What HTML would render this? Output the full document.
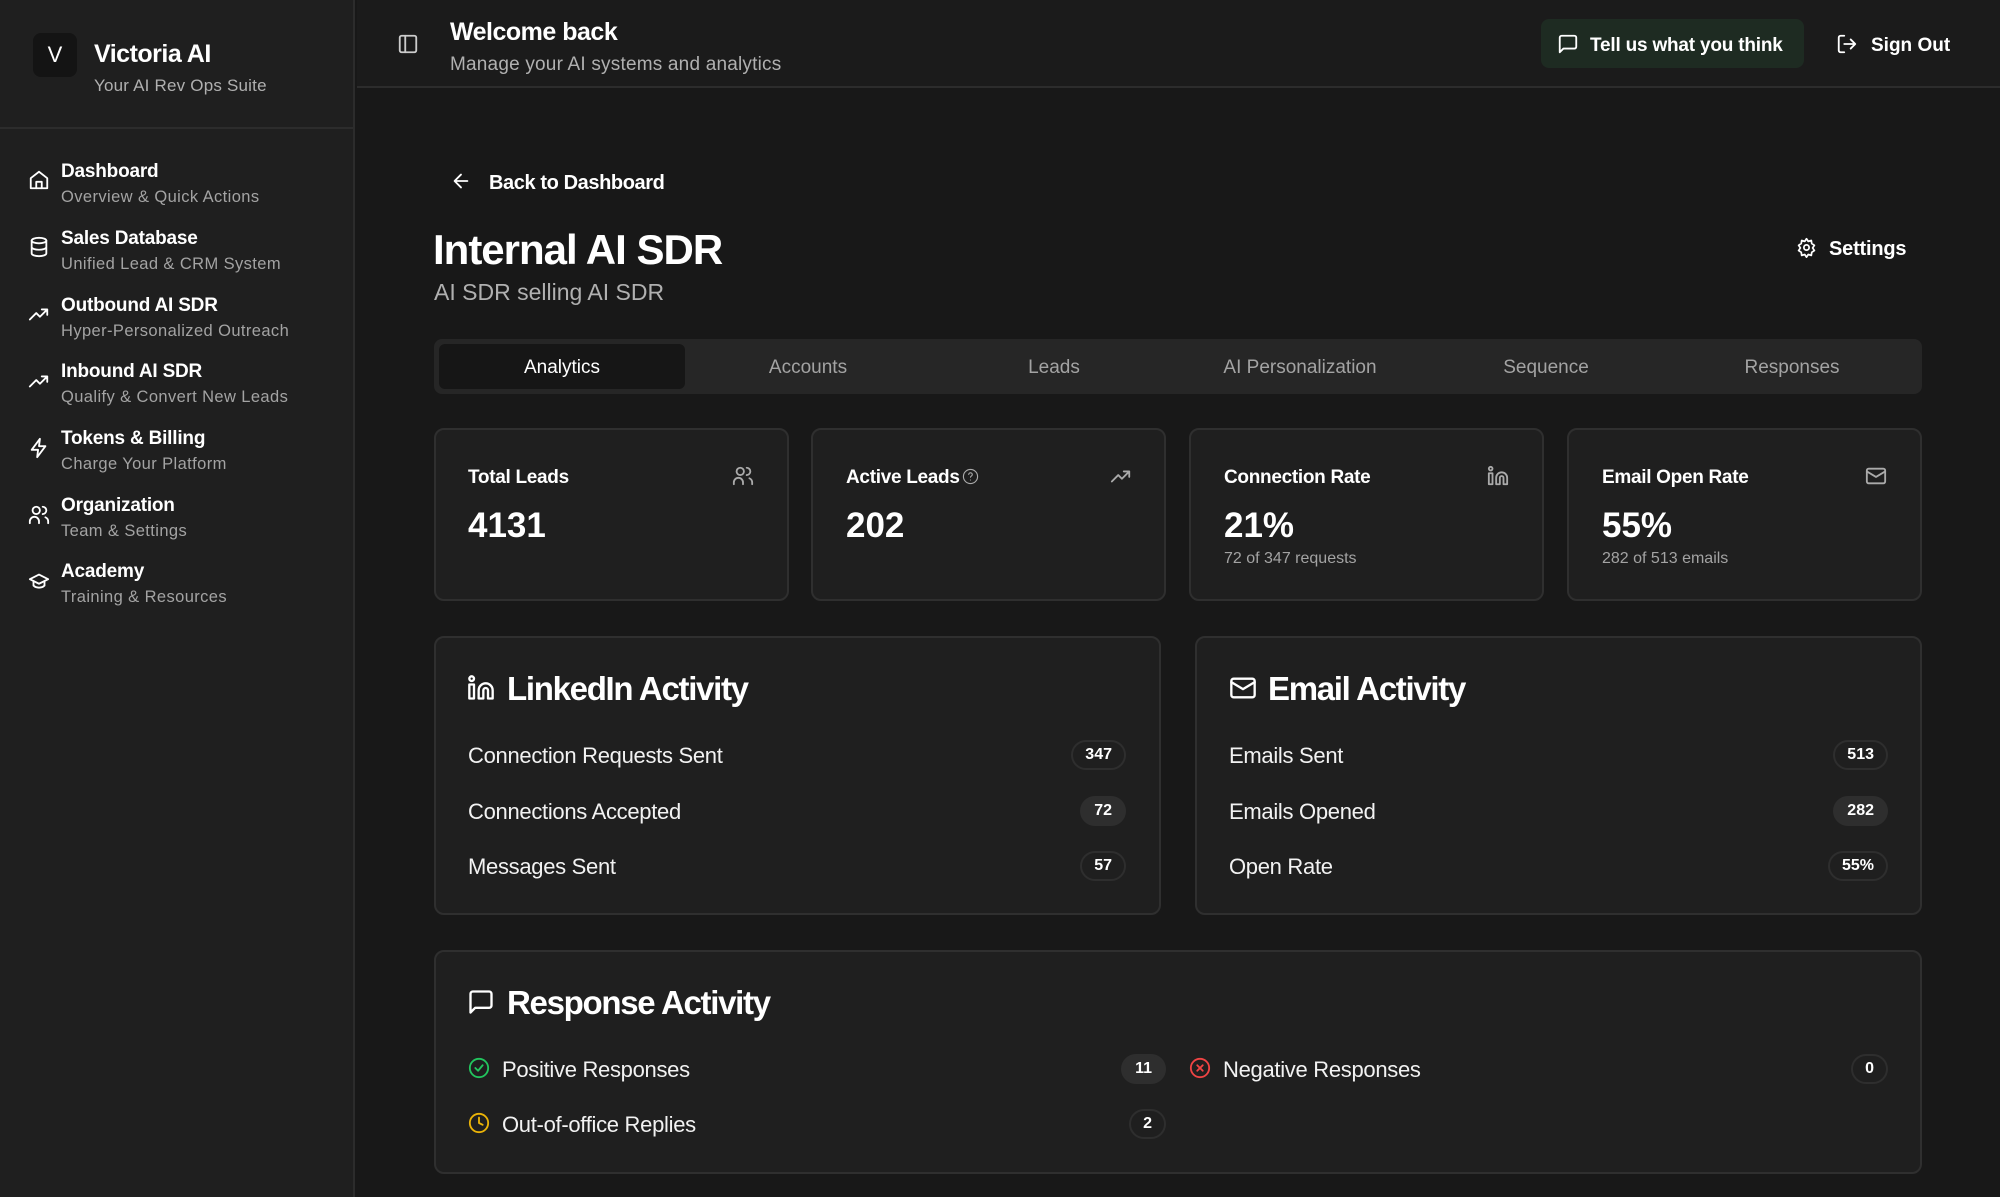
<!DOCTYPE html>
<html><head><meta charset="utf-8">
<style>
*{box-sizing:border-box;margin:0;padding:0}
body{width:2000px;height:1197px;background:#181818;font-family:"Liberation Sans",sans-serif;color:#fff;position:relative;overflow:hidden}
.a{position:absolute;white-space:nowrap}
.t{margin-top:3px}
svg{fill:none;stroke:currentColor;stroke-width:2;stroke-linecap:round;stroke-linejoin:round}
.side{position:absolute;left:0;top:0;width:355px;height:1197px;background:#1f1f1f;border-right:2px solid #2c2c2c}
.nt{font-size:19px;font-weight:bold;letter-spacing:-.2px;margin-top:2px}
.ns{font-size:16.5px;color:#a3a3a3;letter-spacing:.4px;margin-top:2px}
.card{position:absolute;background:#1f1f1f;border:2px solid #2f2f2f;border-radius:10px}
.lbl{font-size:19px;font-weight:bold;letter-spacing:-.3px;margin-top:2px}
.val{font-size:35px;font-weight:bold;margin-top:2px}
.sub{font-size:16px;color:#a3a3a3;margin-top:2px}
.h{font-size:33px;font-weight:bold;letter-spacing:-1.3px;margin-top:2px}
.row{font-size:22px;color:#f2f2f2;letter-spacing:-.3px;margin-top:2px}
.b{position:absolute;height:30px;border:2px solid #2e2e2e;border-radius:15px;font-size:16px;font-weight:bold;line-height:26px;padding:0 12px;text-align:center;margin-top:1px}
.f{background:#2e2e2e}
.tab{position:absolute;top:345px;height:45px;width:246px;line-height:45px;text-align:center;font-size:19px;color:#a3a3a3}
</style></head><body>
<div class="side"></div>
<div class="a" style="left:33px;top:33px;width:44px;height:44px;background:#141414;border-radius:8px;text-align:center;line-height:44px;font-size:22px">V</div>
<div class="a t" style="left:94px;top:37px;font-size:25px;font-weight:bold;letter-spacing:-.5px">Victoria AI</div>
<div class="a t" style="left:94px;top:73px;font-size:17px;color:#b0b0b0;letter-spacing:.2px">Your AI Rev Ops Suite</div>
<div class="a" style="left:0;top:127px;width:355px;height:2px;background:#2c2c2c"></div>

<svg class="a" style="left:28px;top:169px" width="22" height="22" viewBox="0 0 24 24"><path d="M3 10l9-7 9 7v11H3z"/><path d="M9 21v-7h6v7"/></svg>
<div class="a nt" style="left:61px;top:159px">Dashboard</div><div class="a ns" style="left:61px;top:186px">Overview &amp; Quick Actions</div>
<svg class="a" style="left:28px;top:236px" width="22" height="22" viewBox="0 0 24 24"><ellipse cx="12" cy="5" rx="8" ry="3"/><path d="M4 5v14c0 1.7 3.6 3 8 3s8-1.3 8-3V5M4 12c0 1.7 3.6 3 8 3s8-1.3 8-3"/></svg>
<div class="a nt" style="left:61px;top:226px">Sales Database</div><div class="a ns" style="left:61px;top:253px">Unified Lead &amp; CRM System</div>
<svg class="a" style="left:28px;top:303px" width="22" height="22" viewBox="0 0 24 24"><path d="M2 18l7-7 4 4 8-8M15 7h6v6"/></svg>
<div class="a nt" style="left:61px;top:293px">Outbound AI SDR</div><div class="a ns" style="left:61px;top:320px">Hyper-Personalized Outreach</div>
<svg class="a" style="left:28px;top:370px" width="22" height="22" viewBox="0 0 24 24"><path d="M2 18l7-7 4 4 8-8M15 7h6v6"/></svg>
<div class="a nt" style="left:61px;top:359px">Inbound AI SDR</div><div class="a ns" style="left:61px;top:386px">Qualify &amp; Convert New Leads</div>
<svg class="a" style="left:28px;top:437px" width="22" height="22" viewBox="0 0 24 24"><path d="M13 2L4 14h7l-1 8 9-12h-7z"/></svg>
<div class="a nt" style="left:61px;top:426px">Tokens &amp; Billing</div><div class="a ns" style="left:61px;top:453px">Charge Your Platform</div>
<svg class="a" style="left:28px;top:504px" width="22" height="22" viewBox="0 0 24 24"><circle cx="9" cy="7" r="4"/><path d="M2 21v-2a5 5 0 0110 0v2M16 3a4 4 0 010 8M22 21v-2a5 5 0 00-3-4.5"/></svg>
<div class="a nt" style="left:61px;top:493px">Organization</div><div class="a ns" style="left:61px;top:520px">Team &amp; Settings</div>
<svg class="a" style="left:28px;top:570px" width="22" height="22" viewBox="0 0 24 24"><path d="M2 10l10-5 10 5-10 5z"/><path d="M6 12v5c3 3 9 3 12 0v-5"/></svg>
<div class="a nt" style="left:61px;top:559px">Academy</div><div class="a ns" style="left:61px;top:586px">Training &amp; Resources</div>

<div class="a" style="left:357px;top:0;width:1643px;height:88px;background:#1b1b1b;border-bottom:2px solid #2c2c2c"></div>
<svg class="a" style="left:397px;top:33px;color:#ccc" width="22" height="22" viewBox="0 0 24 24"><rect x="3" y="3" width="18" height="18" rx="2"/><path d="M9 3v18"/></svg>
<div class="a t" style="left:450px;top:15px;font-size:25px;font-weight:bold;letter-spacing:-.5px">Welcome back</div>
<div class="a t" style="left:450px;top:51px;font-size:19px;color:#b0b0b0;letter-spacing:.2px">Manage your AI systems and analytics</div>
<div class="a" style="left:1541px;top:19px;width:263px;height:49px;background:#1e2b22;border-radius:8px"></div>
<svg class="a" style="left:1557px;top:33px" width="22" height="22" viewBox="0 0 24 24"><path d="M21 15a2 2 0 01-2 2H7l-4 4V5a2 2 0 012-2h14a2 2 0 012 2z"/></svg>
<div class="a t" style="left:1590px;top:32px;font-size:19px;font-weight:bold;letter-spacing:-.2px">Tell us what you think</div>
<svg class="a" style="left:1836px;top:33px" width="22" height="22" viewBox="0 0 24 24"><path d="M9 21H5a2 2 0 01-2-2V5a2 2 0 012-2h4M16 17l5-5-5-5M21 12H9"/></svg>
<div class="a t" style="left:1871px;top:32px;font-size:19px;font-weight:bold">Sign Out</div>

<svg class="a" style="left:450px;top:170px" width="22" height="22" viewBox="0 0 24 24"><path d="M19 12H5M12 19l-7-7 7-7"/></svg>
<div class="a t" style="left:489px;top:169px;font-size:20px;font-weight:bold;letter-spacing:-.4px">Back to Dashboard</div>
<div class="a t" style="left:433px;top:223px;font-size:42px;font-weight:bold;letter-spacing:-1px">Internal AI SDR</div>
<div class="a t" style="left:434px;top:276px;font-size:23px;color:#b0b0b0">AI SDR selling AI SDR</div>
<svg class="a" style="left:1796px;top:237px" width="21" height="21" viewBox="0 0 24 24"><circle cx="12" cy="12" r="3"/><path d="M12 2l2 3 3.5-1 .5 3.5 3 2-2 3 2 3-3 2-.5 3.5-3.5-1-2 3-2-3-3.5 1-.5-3.5-3-2 2-3-2-3 3-2L6.5 4 10 5z"/></svg>
<div class="a t" style="left:1829px;top:235px;font-size:20px;font-weight:bold;letter-spacing:-.2px">Settings</div>

<div class="a" style="left:434px;top:339px;width:1488px;height:55px;background:#262626;border-radius:8px"></div>
<div class="a" style="left:439px;top:344px;width:246px;height:45px;background:#161616;border-radius:6px"></div>
<div class="tab" style="left:439px;color:#fff">Analytics</div>
<div class="tab" style="left:685px">Accounts</div>
<div class="tab" style="left:931px">Leads</div>
<div class="tab" style="left:1177px">AI Personalization</div>
<div class="tab" style="left:1423px">Sequence</div>
<div class="tab" style="left:1669px">Responses</div>

<div class="card" style="left:434px;top:428px;width:355px;height:173px"></div>
<div class="a lbl" style="left:468px;top:465px">Total Leads</div>
<svg class="a" style="left:732px;top:465px;color:#aaa" width="22" height="22" viewBox="0 0 24 24"><circle cx="9" cy="7" r="4"/><path d="M2 21v-2a5 5 0 0110 0v2M16 3a4 4 0 010 8M22 21v-2a5 5 0 00-3-4.5"/></svg>
<div class="a val" style="left:468px;top:504px">4131</div>

<div class="card" style="left:811px;top:428px;width:355px;height:173px"></div>
<div class="a lbl" style="left:846px;top:465px">Active Leads</div>
<svg class="a" style="left:962px;top:468px;color:#aaa;stroke-width:1.6" width="17" height="17" viewBox="0 0 24 24"><circle cx="12" cy="12" r="10"/><path d="M9.5 9a2.5 2.5 0 015 .5c0 1.7-2.5 2-2.5 3.5M12 17h.01"/></svg>
<svg class="a" style="left:1110px;top:465px;color:#aaa" width="22" height="22" viewBox="0 0 24 24"><path d="M2 18l7-7 4 4 8-8M15 7h6v6"/></svg>
<div class="a val" style="left:846px;top:504px">202</div>

<div class="card" style="left:1189px;top:428px;width:355px;height:173px"></div>
<div class="a lbl" style="left:1224px;top:465px">Connection Rate</div>
<svg class="a" style="left:1487px;top:465px;color:#aaa" width="22" height="22" viewBox="0 0 24 24"><path d="M16 8a6 6 0 016 6v7h-4v-7a2 2 0 00-4 0v7h-4v-7a6 6 0 016-6zM2 9h4v12H2z"/><circle cx="4" cy="4" r="2"/></svg>
<div class="a val" style="left:1224px;top:504px">21%</div>
<div class="a sub" style="left:1224px;top:548px">72 of 347 requests</div>

<div class="card" style="left:1567px;top:428px;width:355px;height:173px"></div>
<div class="a lbl" style="left:1602px;top:465px">Email Open Rate</div>
<svg class="a" style="left:1865px;top:465px;color:#aaa" width="22" height="22" viewBox="0 0 24 24"><rect x="2" y="4" width="20" height="16" rx="2"/><path d="M22 7l-10 6L2 7"/></svg>
<div class="a val" style="left:1602px;top:504px">55%</div>
<div class="a sub" style="left:1602px;top:548px">282 of 513 emails</div>

<div class="card" style="left:434px;top:636px;width:727px;height:279px"></div>
<svg class="a" style="left:467px;top:674px" width="28" height="28" viewBox="0 0 24 24"><path d="M16 8a6 6 0 016 6v7h-4v-7a2 2 0 00-4 0v7h-4v-7a6 6 0 016-6zM2 9h4v12H2z"/><circle cx="4" cy="4" r="2"/></svg>
<div class="a h" style="left:507px;top:668px">LinkedIn Activity</div>
<div class="a row" style="left:468px;top:741px">Connection Requests Sent</div><div class="b" style="right:874px;top:739px">347</div>
<div class="a row" style="left:468px;top:797px">Connections Accepted</div><div class="b f" style="right:874px;top:795px">72</div>
<div class="a row" style="left:468px;top:852px">Messages Sent</div><div class="b" style="right:874px;top:850px">57</div>

<div class="card" style="left:1195px;top:636px;width:727px;height:279px"></div>
<svg class="a" style="left:1229px;top:674px" width="28" height="28" viewBox="0 0 24 24"><rect x="2" y="4" width="20" height="16" rx="2"/><path d="M22 7l-10 6L2 7"/></svg>
<div class="a h" style="left:1268px;top:668px">Email Activity</div>
<div class="a row" style="left:1229px;top:741px">Emails Sent</div><div class="b" style="right:112px;top:739px">513</div>
<div class="a row" style="left:1229px;top:797px">Emails Opened</div><div class="b f" style="right:112px;top:795px">282</div>
<div class="a row" style="left:1229px;top:852px">Open Rate</div><div class="b" style="right:112px;top:850px">55%</div>

<div class="card" style="left:434px;top:950px;width:1488px;height:224px"></div>
<svg class="a" style="left:467px;top:988px" width="28" height="28" viewBox="0 0 24 24"><path d="M21 15a2 2 0 01-2 2H7l-4 4V5a2 2 0 012-2h14a2 2 0 012 2z"/></svg>
<div class="a h" style="left:507px;top:982px">Response Activity</div>
<svg class="a" style="left:468px;top:1057px;color:#22c55e" width="22" height="22" viewBox="0 0 24 24"><circle cx="12" cy="12" r="10"/><path d="M8 12l3 3 5-6"/></svg>
<div class="a row" style="left:502px;top:1055px">Positive Responses</div><div class="b f" style="right:834px;top:1053px">11</div>
<svg class="a" style="left:468px;top:1112px;color:#eab308" width="22" height="22" viewBox="0 0 24 24"><circle cx="12" cy="12" r="10"/><path d="M12 6v6l4 2"/></svg>
<div class="a row" style="left:502px;top:1110px">Out-of-office Replies</div><div class="b" style="right:834px;top:1108px">2</div>
<svg class="a" style="left:1189px;top:1057px;color:#ef4444" width="22" height="22" viewBox="0 0 24 24"><circle cx="12" cy="12" r="10"/><path d="M15 9l-6 6M9 9l6 6"/></svg>
<div class="a row" style="left:1223px;top:1055px">Negative Responses</div><div class="b" style="right:112px;top:1053px">0</div>
</body></html>
